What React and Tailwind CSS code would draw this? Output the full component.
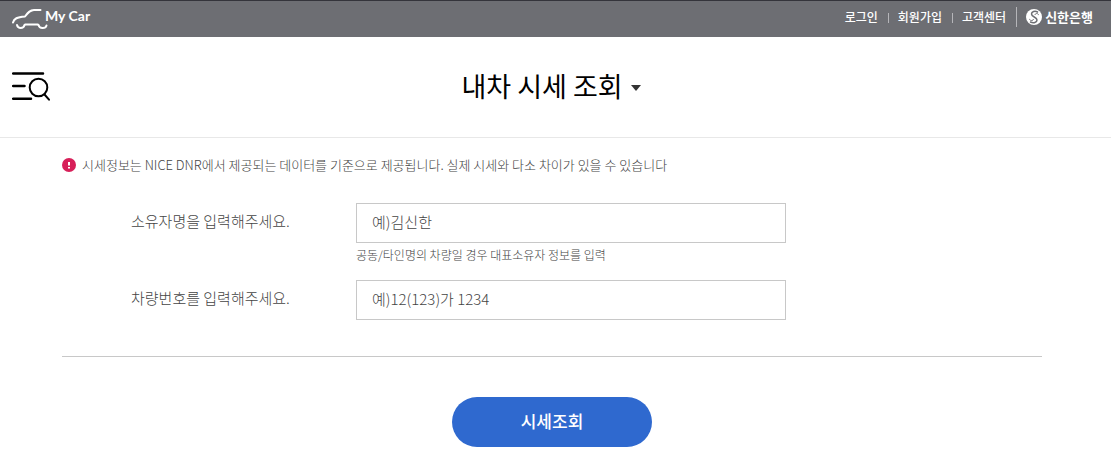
import React, { useState } from 'react';

const utilLinks = ['로그인', '회원가입', '고객센터'];

const CarIcon = () => (
  <svg
    className="h-[22px] w-9"
    viewBox="0 0 36 22"
    fill="none"
    stroke="currentColor"
    strokeWidth="2"
    strokeLinecap="round"
    strokeLinejoin="round"
    aria-hidden="true"
  >
    <path d="M1 14.5C2 10.5 5 9.200 13 8.500C16 4.500 18 2 22 2H28.500" />
    <path d="M5 17C6 21 11.500 21 12.500 17L13.500 16.500H25.500L26.500 17C27.500 21 33.500 21 34.500 17.500" />
  </svg>
);

const BankIcon = () => (
  <svg className="size-4" viewBox="0 0 16 16" fill="none" strokeLinecap="round" aria-hidden="true">
    <circle cx="8" cy="8" r="8" fill="#fff" />
    <path d="M11.500 3C9 1.500 5.500 2.500 5.500 5C5.500 8 11 8 11 11C11 13.500 7.500 14.500 4.500 13" stroke="#6d6e73" strokeWidth="1.500" />
    <path d="M12.500 5.500C11.500 4 9.500 4.200 9 5.500M3.500 10.500C4.500 12 7 12 7.500 10.500" stroke="#6d6e73" strokeWidth="1" />
  </svg>
);

const TopBar = () => (
  <header className="flex h-[37px] items-start justify-between border-t border-[#34343b] bg-[#6d6e73] pr-[18px] pl-3 text-white">
    <a href="#home" className="flex items-start pt-[7px]">
      <CarIcon />
      <span className="-ml-[3px] font-[Lato,sans-serif] text-sm leading-4 font-bold">My Car</span>
    </a>
    <div className="flex items-center pt-[6px]">
      <nav className="flex items-center text-xs leading-5 font-medium">
        {utilLinks.map((label, i) => (
          <React.Fragment key={label}>
            {i > 0 && <span className="mr-[9px] ml-[10px] mt-[2px] h-[10px] w-px bg-[#b5b5b9]" />}
            <a href="#util">{label}</a>
          </React.Fragment>
        ))}
      </nav>
      <span className="mr-[9px] ml-[10px] h-5 w-px bg-[#b5b5b9]" />
      <a href="#bank" className="flex items-center gap-[3px] text-[13px] leading-5 font-bold">
        <BankIcon />
        신한은행
      </a>
    </div>
  </header>
);

const TitleBar = () => (
  <div className="grid h-[101px] grid-cols-[1fr_auto_1fr] items-center border-b border-[#e8e8e8] pr-[21px] pl-3">
    <button type="button" aria-label="전체메뉴 검색" className="justify-self-start pb-[2px]">
      <svg className="h-8 w-10" viewBox="0 0 40 32" fill="none" stroke="#000" strokeLinecap="round" aria-hidden="true">
        <path d="M1.200 3.500H31M1.200 16H12.500M1.200 28.700H19" strokeWidth="2.500" />
        <circle cx="26.500" cy="17.500" r="8.800" strokeWidth="2" />
        <path d="M32.500 24.500L37 29.700" strokeWidth="2" />
      </svg>
    </button>
    <h1>
      <button type="button" className="flex items-center gap-2 pb-[3px] text-[27px] leading-10 font-normal text-black">
        내차 시세 조회
        <svg className="mt-1 h-[6px] w-[10px]" viewBox="0 0 10 6" fill="#333" aria-hidden="true">
          <path d="M0 0H10L5 6Z" />
        </svg>
      </button>
    </h1>
  </div>
);

const Field = ({ id, label, hint, placeholder }) => {
  const [value, setValue] = useState('');

  return (
    <div className="flex items-start">
      <label htmlFor={id} className="w-[225px] shrink-0 text-[15px] leading-9">
        {label}
      </label>
      <div className="w-full max-w-[430px]">
        <input
          id={id}
          type="text"
          value={value}
          placeholder={placeholder}
          onChange={(e) => setValue(e.target.value)}
          className="block h-10 w-full border border-[#c8c8c8] px-[15px] pb-1 text-[15px] placeholder:text-[#444]"
        />
        {hint && <p className="mt-[2px] text-xs leading-5">{hint}</p>}
      </div>
    </div>
  );
};

const App = () => {
  return (
    <div className="bg-white font-['Noto_Sans_CJK_KR',sans-serif] text-[#444]">
      <TopBar />
      <TitleBar />
      <main className="mx-auto max-w-[1111px] pr-[69px] pl-[62px]">
        <p className="flex items-center gap-[6px] pt-[17px] text-[13px] leading-5 font-light">
          <svg className="size-[14px] shrink-0" viewBox="0 0 14 14" aria-hidden="true">
            <circle cx="7" cy="7" r="7" fill="#d71f59" />
            <path d="M7 4V7.500M7 9V10.500" stroke="#fff" strokeWidth="2" />
          </svg>
          시세정보는 NICE DNR에서 제공되는 데이터를 기준으로 제공됩니다. 실제 시세와 다소 차이가 있을 수 있습니다
        </p>

        <form onSubmit={(e) => e.preventDefault()}>
          <div className="mt-7 flex flex-col gap-[15px] border-b border-[#c8c8c8] pb-9 pl-[69px] font-light">
            <Field
              id="owner"
              label="소유자명을 입력해주세요."
              placeholder="예)김신한"
              hint="공동/타인명의 차량일 경우 대표소유자 정보를 입력"
            />
            <Field id="plate" label="차량번호를 입력해주세요." placeholder="예)12(123)가 1234" />
          </div>
          <div className="flex justify-center pt-10 pb-4">
            <button type="submit" className="h-[50px] w-[200px] rounded-full bg-[#2f69cf] pb-[3px] text-[17px] font-medium text-white">
              시세조회
            </button>
          </div>
        </form>
      </main>
    </div>
  );
};

export default App;
